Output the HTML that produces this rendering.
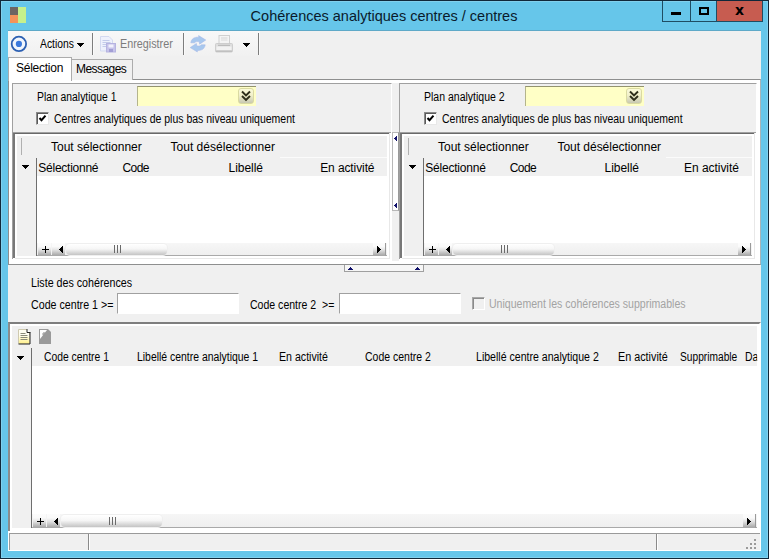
<!DOCTYPE html>
<html lang="fr">
<head>
<meta charset="utf-8">
<title>Cohérences analytiques centres / centres</title>
<style>
*{box-sizing:border-box;margin:0;padding:0}
html,body{width:769px;height:559px;overflow:hidden}
body{position:relative;background:#66c6ea;font-family:"Liberation Sans",sans-serif;font-size:11px;color:#000}
.abs,.t,.s{position:absolute;white-space:nowrap}
.t{font-size:12px;line-height:13px;height:13px;transform-origin:0 50%}
.s{font-size:12px;line-height:14px;height:14px}
#frame{left:0;top:0;width:769px;height:559px;border:1px solid #10283a;box-shadow:inset 0 0 0 1px rgba(255,255,255,0.18)}
#title{left:0;width:768px;top:5px;height:22px;line-height:22px;font-size:14.5px;text-align:center;color:#0a1a2c}
#client{left:8px;top:31px;width:753px;height:520px;background:#f0f0f0}
.btn{top:1px;height:21px;border:1px solid #1f4d63;border-top:none}
.sep{width:2px;background:#7d7d7d;border-right:1px solid #fafafa;top:33px;height:22px}
.sunk{border:1px solid #a0a0a0;border-right-color:#fff;border-bottom-color:#fff}
.hdr{background:#f0f0f0}
.sbtn{background:linear-gradient(#fcfcfc 0%,#fafafa 30%,#e2e2e2 58%,#c4c4c4 80%,#ababab 100%)}
.thumb{background:linear-gradient(#ffffff 0%,#f6f6f6 45%,#c4c4c4 100%);border-radius:4px;box-shadow:0 0 0 1px #efefef}
</style>
</head>
<body>
<div class="abs" id="frame"></div>
<div class="abs" id="title">Cohérences analytiques centres / centres</div>
<div class="abs" style="left:10px;top:7px;width:8px;height:8px;background:#6d6562"></div>
<div class="abs" style="left:10px;top:15px;width:8px;height:8px;background:#f4935a"></div>
<div class="abs" style="left:18px;top:7px;width:8px;height:16px;background:#c6f08c"></div>
<div class="abs btn" style="left:662px;top:1px;width:29px;height:21px;"></div>
<div class="abs btn" style="left:690px;top:1px;width:27px;height:21px;"></div>
<div class="abs btn" style="left:716px;top:1px;width:47px;height:21px;background:#c75c50"></div>
<div class="abs" style="left:671px;top:12px;width:10px;height:3px;background:#000"></div>
<div class="abs" style="left:699px;top:7px;width:10px;height:8px;border:2px solid #000"></div>
<div class="abs" id="xbtn" style="left:716px;top:-1px;width:47px;height:22px;line-height:22px;text-align:center;font-size:14px;font-weight:bold;font-family:'DejaVu Sans','Liberation Sans',sans-serif">x</div>
<div class="abs" id="client"></div>
<div class="abs" style="left:8px;top:30px;width:753px;height:1px;background:#5ea9c8"></div>
<div class="abs" style="left:8px;top:31px;width:252px;height:25px;background:linear-gradient(#f8f8f8,#f1f1f1)"></div>
<svg class="abs" style="left:10px;top:35px" width="18" height="18" viewBox="0 0 18 18"><circle cx="8.900" cy="8.900" r="7.200" fill="#f1f6fd" stroke="#2d60b2" stroke-width="1.800"/><circle cx="8.900" cy="8.900" r="3.100" fill="#3b79dc"/></svg>
<div class="t" id="actions" style="left:40.0px;top:38px;transform:scaleX(0.8623);">Actions</div>
<div class="abs" style="left:77px;top:43px;width:7px;height:1px;background:#000"></div>
<div class="abs" style="left:78px;top:44px;width:5px;height:1px;background:#000"></div>
<div class="abs" style="left:79px;top:45px;width:3px;height:1px;background:#000"></div>
<div class="abs" style="left:80px;top:46px;width:1px;height:1px;background:#000"></div>
<div class="abs sep" style="left:92px;top:33px;width:2px;height:22px;"></div>
<svg class="abs" style="left:100px;top:36px" width="17" height="17" viewBox="0 0 17 17"><path d="M0.500 0.500h8.500l3.500 3.500v11h-12z" fill="#eef1fc" stroke="#d3d9f0"/><path d="M2.500 4.500h7M2.500 6.500h8M2.500 8.500h8M2.500 10.500h5" stroke="#c3cbea" stroke-width="1"/><rect x="6.500" y="7.500" width="9" height="8.500" fill="#c6c3ea" stroke="#b6b3e0"/><rect x="8.500" y="8.500" width="5" height="3" fill="#f1f1fc"/><rect x="9" y="13" width="4" height="3" fill="#a29ed4"/></svg>
<div class="t" id="enreg" style="left:119.6px;top:38px;transform:scaleX(0.8997);color:#7c7c7c">Enregistrer</div>
<div class="abs sep" style="left:183px;top:33px;width:2px;height:22px;"></div>
<svg class="abs" style="left:189px;top:35px" width="18" height="18" viewBox="0 0 18 18"><g fill="#a8c8ee" stroke="#a3b4e6" stroke-width="0.5"><path d="M1.800 7.800C2.200 4 5.200 1.800 9.800 2.200L9.600 0.600L16.800 5L10.600 9.200L10.300 6.800C8.200 6.200 6.400 6.800 5.600 7.800Z"/><path transform="rotate(180 9 8.800)" d="M1.800 7.800C2.200 4 5.200 1.800 9.800 2.200L9.600 0.600L16.800 5L10.600 9.200L10.300 6.800C8.200 6.200 6.400 6.800 5.600 7.800Z"/></g></svg>
<svg class="abs" style="left:215px;top:35px" width="18" height="18" viewBox="0 0 18 18"><rect x="4" y="0.500" width="10.500" height="9" fill="#f4f4f4" stroke="#d0d0d0"/><rect x="6" y="2.500" width="6.500" height="1" fill="#d4d4d4"/><rect x="6" y="4.500" width="6.500" height="1" fill="#dadada"/><path d="M1.500 8.500h15q1 0 1 1v6.500q0 1-1 1h-15q-1 0-1-1v-6.500q0-1 1-1z" fill="#dedede" stroke="#c6c6c6" stroke-width="0.8"/><rect x="3" y="9.800" width="12" height="1" fill="#b4b4b4"/><rect x="1.500" y="11.500" width="15" height="3.500" fill="#f2f2f2"/><rect x="1" y="15.500" width="16" height="1.500" fill="#c0c0c0"/></svg>
<div class="abs" style="left:243px;top:43px;width:7px;height:1px;background:#000"></div>
<div class="abs" style="left:244px;top:44px;width:5px;height:1px;background:#000"></div>
<div class="abs" style="left:245px;top:45px;width:3px;height:1px;background:#000"></div>
<div class="abs" style="left:246px;top:46px;width:1px;height:1px;background:#000"></div>
<div class="abs sep" style="left:258px;top:33px;width:2px;height:22px;"></div>
<div class="abs" style="left:8px;top:79px;width:753px;height:186px;background:#fff;border:1px solid #8e8f8f;border-right-color:#a8b4ba"></div>
<div class="abs" style="left:71px;top:59px;width:62px;height:21px;background:#f0f0f0;border:1px solid #acacac;border-bottom:none"></div>
<div class="abs" style="left:8px;top:57px;width:64px;height:24px;background:#fff;border:1px solid #acacac;border-bottom:none"></div>
<div class="s" id="tab1" style="left:16px;top:61px;letter-spacing:-0.25px;">Sélection</div>
<div class="s" id="tab2" style="left:76px;top:62px;letter-spacing:-0.55px;">Messages</div>
<div class="abs" style="left:392px;top:83px;width:7px;height:178px;background:#f0f0f0"></div>
<div class="abs" style="left:12px;top:83px;width:380px;height:175px;background:#f0f0f0;border:1px solid #a0a0a0;border-right-color:#fff;border-bottom-color:#fff"></div>
<div class="t" id="plan1" style="left:36.8px;top:91px;transform:scaleX(0.8624);">Plan analytique 1</div>
<div class="abs" style="left:137px;top:86px;width:119px;height:20px;background:#ffffc6;border-top:1px solid #93936f;border-left:1px solid #b4b48c"></div>
<div class="abs" style="left:238px;top:88px;width:16px;height:16px;background:linear-gradient(#fbfbda 0%,#f1f0ca 45%,#c8c8b2 100%);border:1px solid #dadaa2;border-radius:3px"></div>
<svg class="abs" style="left:238px;top:88px" width="16" height="16" viewBox="0 0 16 16"><path d="M4 3.5l4 4 4-4M4 8l4 4 4-4" fill="none" stroke="#2e2e1a" stroke-width="1.9"/></svg>
<div class="abs" style="left:36px;top:112px;width:13px;height:13px;background:#fff;border:1px solid #8a8a8a;border-right-color:#e8e8e8;border-bottom-color:#e8e8e8;box-shadow:inset 1px 1px 0 #5a5a5a"></div>
<svg class="abs" style="left:36px;top:112px" width="13" height="13" viewBox="0 0 13 13"><path d="M3.5 6l2 2.200 4-4.500" fill="none" stroke="#000" stroke-width="2"/></svg>
<div class="t" id="cen1" style="left:53.7px;top:113px;transform:scaleX(0.8744);">Centres analytiques de plus bas niveau uniquement</div>
<div class="abs" style="left:12px;top:132px;width:379px;height:127px;background:#fff;border-top:1px solid #a0a0a0;border-left:1px solid #a0a0a0"></div>
<div class="abs" style="left:13px;top:133px;width:377px;height:125px;border-top:1px solid #696969;border-left:2px solid #787878"></div>
<div class="abs" style="left:389px;top:133px;width:1px;height:126px;background:#e8e8e8"></div>
<div class="abs" style="left:15px;top:258px;width:375px;height:1px;background:#e8e8e8"></div>
<div class="abs hdr" style="left:17px;top:136px;width:370px;height:22px;"></div>
<div class="abs" style="left:21px;top:138px;width:1px;height:17px;background:#b0b0b0"></div>
<div class="s" id="ts1" style="left:51px;top:140px;letter-spacing:0px;">Tout sélectionner</div>
<div class="s" id="td1" style="left:170.5px;top:140px;letter-spacing:0.02px;">Tout désélectionner</div>
<div class="abs" style="left:280px;top:157px;width:107px;height:1px;background:#fbfbfb"></div>
<div class="abs hdr" style="left:17px;top:158px;width:19px;height:98px;"></div>
<div class="abs hdr" style="left:37px;top:158px;width:350px;height:18px;"></div>
<div class="abs" style="left:36px;top:158px;width:1px;height:98px;background:#6e6e6e"></div>
<div class="abs" style="left:22px;top:165px;width:7px;height:1px;background:#000"></div>
<div class="abs" style="left:23px;top:166px;width:5px;height:1px;background:#000"></div>
<div class="abs" style="left:24px;top:167px;width:3px;height:1px;background:#000"></div>
<div class="abs" style="left:25px;top:168px;width:1px;height:1px;background:#000"></div>
<div class="s" id="h1a" style="left:38.3px;top:161px;letter-spacing:-0.25px;">Sélectionné</div>
<div class="s" id="h1b" style="left:122.5px;top:161px;letter-spacing:-0.55px;">Code</div>
<div class="s" id="h1c" style="left:228.5px;top:161px;letter-spacing:-0.03px;">Libellé</div>
<div class="s" id="h1d" style="left:320.2px;top:161px;letter-spacing:-0.1px;">En activité</div>
<div class="abs" style="left:37px;top:243px;width:350px;height:13px;background:linear-gradient(#f6f6f6,#efefef);border-bottom:1px solid #a9a9a9"></div>
<div class="abs sbtn" style="left:38px;top:243px;width:13px;height:12px;"></div>
<div class="abs" style="left:42px;top:249px;width:7px;height:1px;background:#000"></div>
<div class="abs" style="left:45px;top:246px;width:1px;height:7px;background:#000"></div>
<div class="abs sbtn" style="left:52px;top:243px;width:13px;height:12px;"></div>
<div class="abs" style="left:59px;top:249px;width:1px;height:1px;background:#000"></div>
<div class="abs" style="left:60px;top:248px;width:1px;height:3px;background:#000"></div>
<div class="abs" style="left:61px;top:247px;width:1px;height:5px;background:#000"></div>
<div class="abs" style="left:62px;top:246px;width:1px;height:7px;background:#000"></div>
<div class="abs thumb" style="left:66px;top:244px;width:101px;height:11px;"></div>
<div class="abs" style="left:114px;top:245px;width:1px;height:8px;background:#6a6a6a"></div>
<div class="abs" style="left:117px;top:245px;width:1px;height:8px;background:#6a6a6a"></div>
<div class="abs" style="left:120px;top:245px;width:1px;height:8px;background:#6a6a6a"></div>
<div class="abs sbtn" style="left:373px;top:243px;width:13px;height:13px;border-right:1px solid #9a9a9a;border-bottom:1px solid #a8a8a8"></div>
<div class="abs" style="left:377px;top:246px;width:1px;height:7px;background:#000"></div>
<div class="abs" style="left:378px;top:247px;width:1px;height:5px;background:#000"></div>
<div class="abs" style="left:379px;top:248px;width:1px;height:3px;background:#000"></div>
<div class="abs" style="left:380px;top:249px;width:1px;height:1px;background:#000"></div>
<div class="abs" style="left:399px;top:83px;width:358px;height:175px;background:#f0f0f0;border:1px solid #a0a0a0;border-right-color:#fff;border-bottom-color:#fff"></div>
<div class="t" id="plan2" style="left:424.4px;top:91px;transform:scaleX(0.8754);">Plan analytique 2</div>
<div class="abs" style="left:525px;top:86px;width:119px;height:20px;background:#ffffc6;border-top:1px solid #93936f;border-left:1px solid #b4b48c"></div>
<div class="abs" style="left:626px;top:88px;width:16px;height:16px;background:linear-gradient(#fbfbda 0%,#f1f0ca 45%,#c8c8b2 100%);border:1px solid #dadaa2;border-radius:3px"></div>
<svg class="abs" style="left:626px;top:88px" width="16" height="16" viewBox="0 0 16 16"><path d="M4 3.5l4 4 4-4M4 8l4 4 4-4" fill="none" stroke="#2e2e1a" stroke-width="1.9"/></svg>
<div class="abs" style="left:424px;top:112px;width:13px;height:13px;background:#fff;border:1px solid #8a8a8a;border-right-color:#e8e8e8;border-bottom-color:#e8e8e8;box-shadow:inset 1px 1px 0 #5a5a5a"></div>
<svg class="abs" style="left:424px;top:112px" width="13" height="13" viewBox="0 0 13 13"><path d="M3.5 6l2 2.200 4-4.500" fill="none" stroke="#000" stroke-width="2"/></svg>
<div class="t" id="cen2" style="left:441.7px;top:113px;transform:scaleX(0.8733);">Centres analytiques de plus bas niveau uniquement</div>
<div class="abs" style="left:399px;top:132px;width:357px;height:127px;background:#fff;border-top:1px solid #a0a0a0;border-left:1px solid #a0a0a0"></div>
<div class="abs" style="left:400px;top:133px;width:355px;height:125px;border-top:1px solid #696969;border-left:2px solid #787878"></div>
<div class="abs" style="left:754px;top:133px;width:1px;height:126px;background:#e8e8e8"></div>
<div class="abs" style="left:402px;top:258px;width:353px;height:1px;background:#e8e8e8"></div>
<div class="abs hdr" style="left:404px;top:136px;width:348px;height:22px;"></div>
<div class="abs" style="left:408px;top:138px;width:1px;height:17px;background:#b0b0b0"></div>
<div class="s" id="ts2" style="left:438px;top:140px;letter-spacing:0px;">Tout sélectionner</div>
<div class="s" id="td2" style="left:557.5px;top:140px;letter-spacing:-0.03px;">Tout désélectionner</div>
<div class="abs" style="left:666px;top:157px;width:86px;height:1px;background:#fbfbfb"></div>
<div class="abs hdr" style="left:404px;top:158px;width:19px;height:98px;"></div>
<div class="abs hdr" style="left:424px;top:158px;width:328px;height:18px;"></div>
<div class="abs" style="left:423px;top:158px;width:1px;height:98px;background:#6e6e6e"></div>
<div class="abs" style="left:409px;top:165px;width:7px;height:1px;background:#000"></div>
<div class="abs" style="left:410px;top:166px;width:5px;height:1px;background:#000"></div>
<div class="abs" style="left:411px;top:167px;width:3px;height:1px;background:#000"></div>
<div class="abs" style="left:412px;top:168px;width:1px;height:1px;background:#000"></div>
<div class="s" id="h2a" style="left:425.3px;top:161px;letter-spacing:-0.22px;">Sélectionné</div>
<div class="s" id="h2b" style="left:509.7px;top:161px;letter-spacing:-0.55px;">Code</div>
<div class="s" id="h2c" style="left:604.5px;top:161px;letter-spacing:-0.03px;">Libellé</div>
<div class="s" id="h2d" style="left:684px;top:161px;letter-spacing:-0.04px;">En activité</div>
<div class="abs" style="left:424px;top:243px;width:328px;height:13px;background:linear-gradient(#f6f6f6,#efefef);border-bottom:1px solid #a9a9a9"></div>
<div class="abs sbtn" style="left:425px;top:243px;width:13px;height:12px;"></div>
<div class="abs" style="left:429px;top:249px;width:7px;height:1px;background:#000"></div>
<div class="abs" style="left:432px;top:246px;width:1px;height:7px;background:#000"></div>
<div class="abs sbtn" style="left:439px;top:243px;width:13px;height:12px;"></div>
<div class="abs" style="left:446px;top:249px;width:1px;height:1px;background:#000"></div>
<div class="abs" style="left:447px;top:248px;width:1px;height:3px;background:#000"></div>
<div class="abs" style="left:448px;top:247px;width:1px;height:5px;background:#000"></div>
<div class="abs" style="left:449px;top:246px;width:1px;height:7px;background:#000"></div>
<div class="abs thumb" style="left:453px;top:244px;width:101px;height:11px;"></div>
<div class="abs" style="left:501px;top:245px;width:1px;height:8px;background:#6a6a6a"></div>
<div class="abs" style="left:504px;top:245px;width:1px;height:8px;background:#6a6a6a"></div>
<div class="abs" style="left:507px;top:245px;width:1px;height:8px;background:#6a6a6a"></div>
<div class="abs sbtn" style="left:738px;top:243px;width:13px;height:13px;border-right:1px solid #9a9a9a;border-bottom:1px solid #a8a8a8"></div>
<div class="abs" style="left:742px;top:246px;width:1px;height:7px;background:#000"></div>
<div class="abs" style="left:743px;top:247px;width:1px;height:5px;background:#000"></div>
<div class="abs" style="left:744px;top:248px;width:1px;height:3px;background:#000"></div>
<div class="abs" style="left:745px;top:249px;width:1px;height:1px;background:#000"></div>
<div class="abs" style="left:392px;top:132px;width:7px;height:79px;background:#fff;border:1px solid #b8b8b8;border-right-color:#9a9a9a"></div>
<div class="abs" style="left:394px;top:138px;width:1px;height:1px;background:#10106a"></div>
<div class="abs" style="left:395px;top:137px;width:1px;height:3px;background:#10106a"></div>
<div class="abs" style="left:396px;top:136px;width:1px;height:5px;background:#10106a"></div>
<div class="abs" style="left:394px;top:205px;width:1px;height:1px;background:#10106a"></div>
<div class="abs" style="left:395px;top:204px;width:1px;height:3px;background:#10106a"></div>
<div class="abs" style="left:396px;top:203px;width:1px;height:5px;background:#10106a"></div>
<div class="abs" style="left:344px;top:265px;width:80px;height:7px;background:#f6f6f6;border:1px solid #a0a0a0;border-top:none"></div>
<div class="abs" style="left:350px;top:267px;width:1px;height:1px;background:#10106a"></div>
<div class="abs" style="left:349px;top:268px;width:3px;height:1px;background:#10106a"></div>
<div class="abs" style="left:348px;top:269px;width:5px;height:1px;background:#10106a"></div>
<div class="abs" style="left:417px;top:267px;width:1px;height:1px;background:#10106a"></div>
<div class="abs" style="left:416px;top:268px;width:3px;height:1px;background:#10106a"></div>
<div class="abs" style="left:415px;top:269px;width:5px;height:1px;background:#10106a"></div>
<div class="t" id="liste" style="left:31.2px;top:277px;transform:scaleX(0.8911);">Liste des cohérences</div>
<div class="t" id="cc1" style="left:31.2px;top:299px;transform:scaleX(0.8884);">Code centre 1 &gt;=</div>
<div class="abs sunk" style="left:117px;top:293px;width:122px;height:21px;background:#fff"></div>
<div class="t" id="cc2" style="left:249.5px;top:299px;transform:scaleX(0.8783);">Code centre 2&nbsp; &gt;=</div>
<div class="abs sunk" style="left:339px;top:293px;width:122px;height:21px;background:#fff"></div>
<div class="abs" style="left:472px;top:297px;width:13px;height:13px;background:#f0f0f0;border:1px solid #a8a8a8;border-right-color:#fff;border-bottom-color:#fff;box-shadow:inset 1px 1px 0 #8a8a8a"></div>
<div class="t" id="uniq" style="left:489.2px;top:298px;transform:scaleX(0.8796);color:#a3a3a3">Uniquement les cohérences supprimables</div>
<div class="abs" style="left:8px;top:322px;width:753px;height:209px;background:#fff;border-top:2px solid #7e7e7e;border-left:2px solid #8c8c8c;border-right:2px solid #fff"></div>
<div class="abs hdr" style="left:12px;top:326px;width:745px;height:22px;"></div>
<svg class="abs" style="left:18px;top:329px" width="13" height="16" viewBox="0 0 13 16"><defs><linearGradient id="ng" x1="0" y1="0" x2="0" y2="1"><stop offset="0" stop-color="#fffef2"/><stop offset="1" stop-color="#fff08a"/></linearGradient></defs><path d="M0.5 0.500h8l3 3v11h-11z" fill="#fffef2" stroke="#cfcab0"/><path d="M1 6h10.500v8.500h-10.500z" fill="url(#ng)"/><path d="M9 0v3.500h3.500" fill="#fff" stroke="#222" stroke-width="1"/><path d="M12 3.500v11.500h-11.500" fill="none" stroke="#222" stroke-width="1"/><path d="M2.500 4.500h5M2.500 6.500h7M2.500 8.500h7M2.500 10.500h7" stroke="#8a8a78" stroke-width="1"/></svg>
<svg class="abs" style="left:39px;top:329px" width="13" height="16" viewBox="0 0 13 16"><path d="M0 0h9l3 3v12h-12z" fill="#9a9a9a"/><path d="M1 1h7l-7 9z" fill="#fff"/><path d="M3 5h4M5 3v4" stroke="#9a9a9a" stroke-width="1.200"/></svg>
<div class="abs hdr" style="left:12px;top:348px;width:19px;height:180px;"></div>
<div class="abs hdr" style="left:32px;top:348px;width:725px;height:18px;"></div>
<div class="abs" style="left:31px;top:348px;width:1px;height:180px;background:#6e6e6e"></div>
<div class="abs" style="left:17px;top:356px;width:7px;height:1px;background:#000"></div>
<div class="abs" style="left:18px;top:357px;width:5px;height:1px;background:#000"></div>
<div class="abs" style="left:19px;top:358px;width:3px;height:1px;background:#000"></div>
<div class="abs" style="left:20px;top:359px;width:1px;height:1px;background:#000"></div>
<div class="t" id="b1" style="left:44.4px;top:351px;transform:scaleX(0.8607);">Code centre 1</div>
<div class="t" id="b2" style="left:136.6px;top:351px;transform:scaleX(0.8685);">Libellé centre analytique 1</div>
<div class="t" id="b3" style="left:278.7px;top:351px;transform:scaleX(0.8846);">En activité</div>
<div class="t" id="b4" style="left:364.7px;top:351px;transform:scaleX(0.8739);">Code centre 2</div>
<div class="t" id="b5" style="left:476.4px;top:351px;transform:scaleX(0.8808);">Libellé centre analytique 2</div>
<div class="t" id="b6" style="left:618.4px;top:351px;transform:scaleX(0.8991);">En activité</div>
<div class="t" id="b7" style="left:679.7px;top:351px;transform:scaleX(0.8495);">Supprimable</div>
<div class="t" id="b8" style="left:745px;top:351px;transform:scaleX(0.87);width:13.8px;overflow:hidden">Date</div>
<div class="abs" style="left:32px;top:514px;width:725px;height:14px;background:linear-gradient(#f6f6f6,#efefef);border-bottom:1px solid #a9a9a9"></div>
<div class="abs sbtn" style="left:33px;top:514px;width:13px;height:13px;"></div>
<div class="abs" style="left:37px;top:521px;width:7px;height:1px;background:#000"></div>
<div class="abs" style="left:40px;top:518px;width:1px;height:7px;background:#000"></div>
<div class="abs sbtn" style="left:47px;top:514px;width:13px;height:13px;"></div>
<div class="abs" style="left:54px;top:521px;width:1px;height:1px;background:#000"></div>
<div class="abs" style="left:55px;top:520px;width:1px;height:3px;background:#000"></div>
<div class="abs" style="left:56px;top:519px;width:1px;height:5px;background:#000"></div>
<div class="abs" style="left:57px;top:518px;width:1px;height:7px;background:#000"></div>
<div class="abs thumb" style="left:61px;top:515px;width:101px;height:12px;"></div>
<div class="abs" style="left:109px;top:517px;width:1px;height:8px;background:#6a6a6a"></div>
<div class="abs" style="left:112px;top:517px;width:1px;height:8px;background:#6a6a6a"></div>
<div class="abs" style="left:115px;top:517px;width:1px;height:8px;background:#6a6a6a"></div>
<div class="abs sbtn" style="left:743px;top:514px;width:13px;height:14px;border-right:1px solid #9a9a9a;border-bottom:1px solid #a8a8a8"></div>
<div class="abs" style="left:747px;top:518px;width:1px;height:7px;background:#000"></div>
<div class="abs" style="left:748px;top:519px;width:1px;height:5px;background:#000"></div>
<div class="abs" style="left:749px;top:520px;width:1px;height:3px;background:#000"></div>
<div class="abs" style="left:750px;top:521px;width:1px;height:1px;background:#000"></div>
<div class="abs" style="left:8px;top:531px;width:753px;height:20px;background:#fff"></div>
<div class="abs" style="left:9px;top:533px;width:751px;height:17px;background:#f0f0f0;border-top:1px solid #9a9a9a;border-left:1px solid #9a9a9a"></div>
<div class="abs" style="left:88px;top:534px;width:2px;height:16px;background:#8a8a8a;border-right:1px solid #fff"></div>
<div class="abs" style="left:656px;top:534px;width:2px;height:16px;background:#8a8a8a;border-right:1px solid #fff"></div>
<svg class="abs" style="left:746px;top:538px" width="12" height="12" viewBox="0 0 12 12"><g fill="#9a9a9a"><rect x="8" y="1" width="2" height="2"/><rect x="4" y="5" width="2" height="2"/><rect x="8" y="5" width="2" height="2"/><rect x="0" y="9" width="2" height="2"/><rect x="4" y="9" width="2" height="2"/><rect x="8" y="9" width="2" height="2"/></g></svg>
</body>
</html>
